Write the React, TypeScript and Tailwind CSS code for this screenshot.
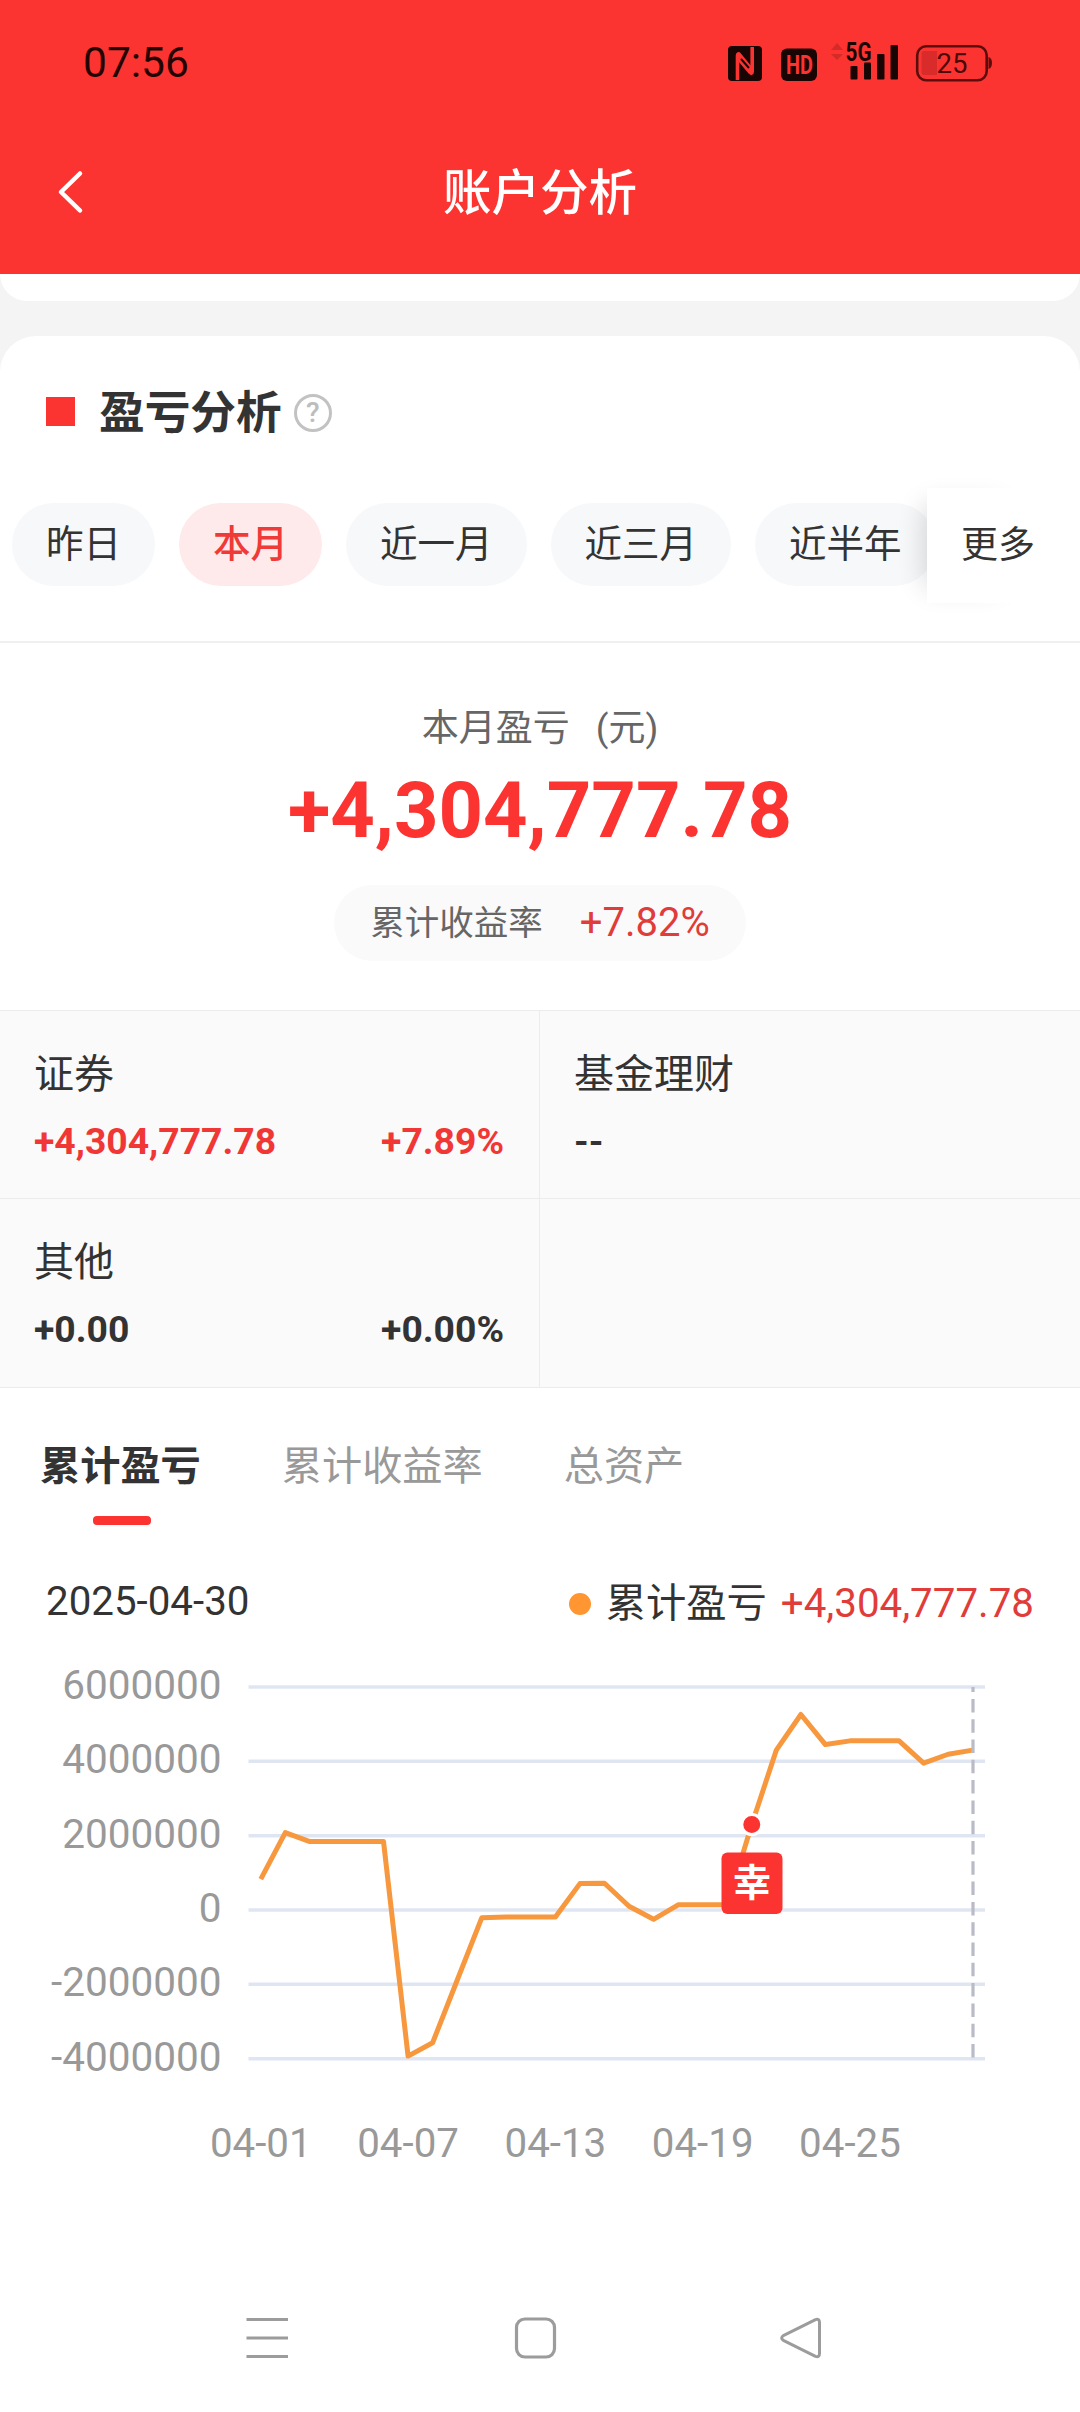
import React from "react";

const GRID_LEFT = 248.5;
const GRID_RIGHT = 985;
const ZERO_Y = 270;
const STEP_Y = 74.35;
const DAY_W = (GRID_RIGHT - GRID_LEFT) / 30;

const dayX = (day: number) => GRID_LEFT + DAY_W * (day - 0.5);
const valueY = (millions: number) => ZERO_Y - (millions / 2) * STEP_Y;

// Cumulative profit per day of the month, in millions.
const series = [
  0.83, 2.08, 1.84, 1.84, 1.84, 1.84, -3.93, -3.57, -1.89, -0.21, -0.19, -0.19, -0.19, 0.71,
  0.72, 0.1, -0.25, 0.14, 0.14, 0.14, 2.3, 4.3, 5.26, 4.45, 4.55, 4.55, 4.55, 3.95, 4.19, 4.3,
];

const yTicks = [6, 4, 2, 0, -2, -4];
const xTicks = [1, 7, 13, 19, 25];

function StatusIcons() {
  return (
    <svg width="270" height="84" viewBox="726 20 270 84" fill="#1a0505">
      <rect x="728" y="45" width="34" height="35" rx="4" />
      <path d="M737.5 79V54.5c0-1.8 1.2-2 2-1L752 69" fill="none" stroke="#fc3431" strokeWidth="3.6" />
      <path d="M752.2 46v24.5c0 1.8-1.2 2-2 1L738 57" fill="none" stroke="#fc3431" strokeWidth="3.6" />
      <path d="M741 58l8 9" stroke="#1a0505" strokeWidth="2" />
      <rect x="781" y="47.5" width="36" height="32.5" rx="6" />
      <text x="799.5" y="72.500" textAnchor="middle" fontSize="25" fontWeight="700" fill="#fc3431" textLength="27" lengthAdjust="spacingAndGlyphs">HD</text>
      <path d="M831 49l6-7 6 7zM831 53l6 6 6-6z" fill="#d42b29" />
      <text x="845.5" y="60" fontSize="25" fontWeight="700" textLength="26" lengthAdjust="spacingAndGlyphs">5G</text>
      <rect x="850.5" y="65" width="7" height="13.5" rx="1" />
      <rect x="864" y="61.5" width="7" height="17" rx="1" />
      <rect x="877" y="53" width="7.5" height="25.5" rx="1" />
      <rect x="890.5" y="44" width="7.5" height="34.5" rx="1" />
      <rect x="917.2" y="45.2" width="69.5" height="34" rx="9" fill="none" stroke="#5a0d0b" strokeWidth="2.6" />
      <path d="M924 50h13v24h-13q-2.500 0-2.500-3V53q0-3 2.500-3z" fill="#d92c2a" />
      <path d="M988.500 56q3.500 1 3.500 6t-3.500 6z" fill="#5a0d0b" />
      <text x="952" y="72" textAnchor="middle" fontSize="27.500" fill="#4a0a09">25</text>
    </svg>
  );
}

function Header() {
  return (
    <header className="h-[274px] bg-[#fc3431]">
      <div className="flex h-[125px] items-center justify-between pl-[83px] pr-[84px]">
        <span className="pt-[2px] text-[42.5px] leading-none text-[#240403]">07:56</span>
        <StatusIcons />
      </div>
      <div className="grid h-[134px] grid-cols-3 items-center">
        <svg className="ml-[54px]" width="32" height="46" viewBox="0 0 32 46" fill="none" stroke="#fff" strokeWidth="4.5" strokeLinecap="round" strokeLinejoin="round">
          <path d="M26 4.500L7 23l19 18.500" />
        </svg>
        <h1 className="pt-[4px] text-center text-[48.5px] font-medium leading-none text-white">账户分析</h1>
      </div>
    </header>
  );
}

const pill = "flex h-[83px] shrink-0 items-center rounded-full px-[34px] text-[37.5px] leading-none";

function Periods() {
  return (
    <div className="relative mt-[13px] h-[83px]">
      <div className="flex gap-[24px] overflow-hidden pl-[12px]">
        <span className={`${pill} bg-[#f7f8fa]`}>昨日</span>
        <span className={`${pill} bg-[#feeaea] font-medium text-[#f03a38]`}>本月</span>
        <span className={`${pill} bg-[#f7f8fa]`}>近一月</span>
        <span className={`${pill} bg-[#f7f8fa]`}>近三月</span>
        <span className={`${pill} bg-[#f7f8fa]`}>近半年</span>
      </div>
      <div className="absolute -top-[15px] right-[46px] flex h-[115px] w-[107px] items-center whitespace-nowrap bg-white pl-[34px] text-[37px] leading-none shadow-[-18px_0_28px_-16px_rgba(0,0,0,0.16)]">
        更多
      </div>
      <div className="absolute -top-[30px] right-0 h-[145px] w-[46px] bg-white" />
    </div>
  );
}

function Summary() {
  return (
    <section className="flex h-[369px] flex-col items-center border-t-2 border-[#f0f0f0] pt-[63px]">
      <p className="flex h-[44px] items-center text-[37px] leading-none text-[#666666]">
        本月盈亏<span className="ml-[26px]">(元)</span>
      </p>
      <p className="mt-[16px] flex h-[90px] items-center text-[77.7px] font-bold leading-none text-[#fc3431]">
        +4,304,777.78
      </p>
      <div className="mt-[29px] flex h-[76px] items-center rounded-full bg-[#fafafa] px-[36px] leading-none">
        <span className="text-[34.5px] text-[#666666]">累计收益率</span>
        <span className="ml-[37px] text-[40px] text-[#e03c3a]">+7.82%</span>
      </div>
    </section>
  );
}

function AssetCell({ name, amount, rate, color }: { name: string; amount: string; rate?: string; color: string }) {
  return (
    <div className="h-full pl-[34px] pr-[35px] pt-[42px]">
      <p className="flex h-[44px] items-center text-[40px] leading-none">{name}</p>
      <p className={`mt-[23px] flex h-[44px] items-center justify-between text-[37.3px] font-bold leading-none ${color}`}>
        <span>{amount}</span>
        <span>{rate}</span>
      </p>
    </div>
  );
}

function Assets() {
  return (
    <section className="grid h-[378px] grid-cols-2 grid-rows-2 border-y border-[#ececec] bg-[#fafafa]">
      <div className="border-b border-r border-[#ececec]">
        <AssetCell name="证券" amount="+4,304,777.78" rate="+7.89%" color="text-[#f03735]" />
      </div>
      <div className="border-b border-[#ececec]">
        <AssetCell name="基金理财" amount="--" color="text-[#333333]" />
      </div>
      <div className="border-r border-[#ececec]">
        <AssetCell name="其他" amount="+0.00" rate="+0.00%" color="text-[#333333]" />
      </div>
    </section>
  );
}

function Chart() {
  const line = series.map((v, i) => `${dayX(i + 1)},${valueY(v)}`).join(" ");
  return (
    <svg className="block" width="1080" height="560" viewBox="0 0 1080 560">
      {yTicks.map((t) => (
        <g key={t}>
          <line x1={GRID_LEFT} x2={GRID_RIGHT} y1={valueY(t)} y2={valueY(t)} stroke="#e0e6f1" strokeWidth="3.5" />
          <text x="221.5" y={valueY(t) + 12} textAnchor="end" fontSize="40.5" fill="#999999">
            {t * 1000000}
          </text>
        </g>
      ))}
      {xTicks.map((d) => (
        <text key={d} x={dayX(d)} y="517" textAnchor="middle" fontSize="40.3" fill="#999999">
          {`04-${String(d).padStart(2, "0")}`}
        </text>
      ))}
      <polyline points={line} fill="none" stroke="#f7983f" strokeWidth="5" strokeLinejoin="round" />
      <line x1="973" x2="973" y1="417.5" y2="47" stroke="#b9bbc6" strokeWidth="3.2" strokeDasharray="13.5 6.8" />
      <circle cx={dayX(21)} cy="184.5" r="10" fill="#fc3431" stroke="#fff" strokeWidth="3" />
      <rect x="721.5" y="212.5" width="61" height="61.5" rx="6" fill="#fc3431" />
      <text x="752" y="255.5" textAnchor="middle" fontSize="38" fontWeight="700" fill="#fff">幸</text>
    </svg>
  );
}

function Trend() {
  return (
    <section>
      <div className="flex h-[137px] gap-[81px] pl-[40px] pt-[54px] text-[40.2px] leading-none text-[#999999]">
        <div className="flex flex-col items-center">
          <span className="flex h-[51px] items-center font-bold text-[#333333]">累计盈亏</span>
          <span className="ml-[4px] mt-[23px] h-[9px] w-[58px] rounded-[4px] bg-[#fc3431]" />
        </div>
        <span className="flex h-[51px] items-center">累计收益率</span>
        <span className="flex h-[51px] items-center">总资产</span>
      </div>
      <div className="flex h-[115px] items-center justify-between pl-[46px] pr-[46px] pt-[43px] text-[40.3px] leading-none">
        <span className="pb-[4px]">2025-04-30</span>
        <div className="flex items-center">
          <span className="mr-[15px] h-[22px] w-[22px] rounded-full bg-[#ff9631]" />
          <span>累计盈亏</span>
          <span className="ml-[14px] text-[#e03c3a]">+4,304,777.78</span>
        </div>
      </div>
      <Chart />
    </section>
  );
}

function NavBar() {
  return (
    <nav className="mt-auto flex h-[149px] items-center gap-[222px] pl-[244px]">
      <svg width="46" height="46" viewBox="0 0 46 46" stroke="#9c9c9c" strokeWidth="3.2" fill="none">
        <path d="M2.500 4.500h41.500M2.500 23h41.500M2.500 41.500h41.500" />
      </svg>
      <svg width="46" height="46" viewBox="0 0 46 46" stroke="#9c9c9c" strokeWidth="3.2" fill="none">
        <rect x="4.5" y="4" width="38" height="38" rx="8.5" />
      </svg>
      <svg width="46" height="46" viewBox="0 0 46 46" stroke="#9c9c9c" strokeWidth="3" fill="none" strokeLinejoin="round">
        <path d="M35.500 4.600L3.800 20.300Q-.500 23 3.800 25.700L35.500 41.400Q39.500 42.500 39.500 38.500V7.500Q39.500 3.500 35.500 4.600Z" />
      </svg>
    </nav>
  );
}

export default function App() {
  return (
    <main className="flex h-[2412px] w-[1080px] flex-col overflow-hidden bg-white font-[Roboto,'Noto_Sans_CJK_SC',sans-serif] text-[#333333]">
      <Header />
      <div className="h-[98px] bg-[#f4f4f4]">
        <div className="h-[27px] rounded-b-[36px] bg-white" />
        <div className="mt-[35px] h-[36px] rounded-t-[36px] bg-white" />
      </div>
      <div className="-mt-[36px] flex h-[154px] shrink-0 items-center pl-[46px]">
        <span className="mb-[4px] h-[29px] w-[29px] bg-[#fc3431]" />
        <h2 className="ml-[24px] pt-[2px] text-[45.7px] font-bold leading-none">盈亏分析</h2>
        <span className="mb-[1px] ml-[12px] flex h-[38px] w-[38px] items-center justify-center rounded-full border-3 border-[#c2c2c2] text-[28px] font-medium leading-none text-[#bdbdbd]">
          ?
        </span>
      </div>
      <Periods />
      <div className="mt-[55px]">
        <Summary />
      </div>
      <Assets />
      <Trend />
      <NavBar />
    </main>
  );
}
